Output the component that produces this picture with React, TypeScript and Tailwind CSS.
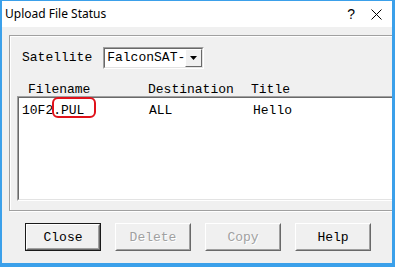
import React from 'react';

const mono = { fontFamily: '"Liberation Mono", "Courier New", monospace' };

const Sunken: React.FC<{ className?: string; children?: React.ReactNode }> = ({ className, children }) => (
    <div className={`border border-t-[#a0a0a0] border-l-[#a0a0a0] border-b-white border-r-white ${className || ''}`}>
        <div className="h-full border border-t-[#696969] border-l-[#696969] border-b-[#e3e3e3] border-r-[#e3e3e3] bg-white">
            {children}
        </div>
    </div>
);

const Button: React.FC<{ label: string; disabled?: boolean; isDefault?: boolean }> = ({ label, disabled, isDefault }) => {
    const inner = (
        <div className="h-full border border-t-white border-l-white border-b-[#696969] border-r-[#696969]">
            <div className="h-full flex items-center justify-center border border-t-[#f0f0f0] border-l-[#f0f0f0] border-b-[#a0a0a0] border-r-[#a0a0a0]">
                <span
                    className={`text-[13px] leading-none ${disabled ? 'text-[#a0a0a0] [text-shadow:1px_1px_0_#fff]' : 'text-black'}`}
                    style={mono}
                >
                    {label}
                </span>
            </div>
        </div>
    );
    return (
        <div className={`w-[76px] h-[28px] bg-[#f0f0f0] ${isDefault ? 'border border-[#1a1a1a]' : ''}`}>
            {inner}
        </div>
    );
};

const App: React.FC = () => {
    return (
        <div className="w-[395px] h-[267px] bg-[#3ba0ea] pl-[2px] pt-[1px] pr-[3px] pb-[4px] overflow-hidden">
            <div className="w-full h-full flex flex-col bg-[#f0f0f0] overflow-hidden">
                {/* title bar */}
                <div className="h-[26px] shrink-0 bg-white flex items-center">
                    <span
                        className="ml-[3px] text-[12px] text-black"
                        style={{ fontFamily: '"Noto Sans", "Liberation Sans", sans-serif' }}
                    >
                        Upload File Status
                    </span>
                    <span
                        className="ml-auto text-[14px] leading-none text-black"
                        style={{ fontFamily: '"Liberation Sans", sans-serif' }}
                    >
                        ?
                    </span>
                    <svg className="ml-[16px] mr-[10px]" width="11" height="11" viewBox="0 0 11 11">
                        <path d="M0.5 0.5 L10.5 10.5 M10.5 0.5 L0.5 10.5" stroke="#000" strokeWidth="1" fill="none" />
                    </svg>
                </div>

                {/* group box */}
                <div className="mt-[8px] ml-[7px] w-[390px] h-[176px] shrink-0 border border-[#a0a0a0] shadow-[inset_1px_1px_0_#fff,1px_1px_0_#fff] flex flex-col">
                    <div className="flex items-center mt-[11px] h-[22px]" style={mono}>
                        <span className="ml-[12px] text-[13px] text-black">Satellite</span>
                        <Sunken className="ml-[11px] w-[101px] h-[22px]">
                            <div className="h-full flex items-center">
                                <span className="ml-[2px] w-[78px] text-[13px] text-black whitespace-nowrap">
                                    FalconSAT-
                                </span>
                                <div className="w-[17px] h-full bg-[#f0f0f0] border border-t-white border-l-white border-b-[#696969] border-r-[#696969] flex items-center justify-center">
                                    <svg width="7" height="4" viewBox="0 0 7 4">
                                        <path d="M0 0 H7 L3.5 4 Z" fill="#000" />
                                    </svg>
                                </div>
                            </div>
                        </Sunken>
                    </div>

                    <div className="flex mt-[13px] h-[15px] items-center text-[13px] text-black" style={mono}>
                        <span className="ml-[18px] w-[120px]">Filename</span>
                        <span className="w-[103px]">Destination</span>
                        <span>Title</span>
                    </div>

                    <Sunken className="ml-[7px] mt-[-1px] h-[105px]">
                        <div className="flex h-[21px] leading-[25px] text-[13px] text-black" style={mono}>
                            <span className="ml-[3px] w-[127px] whitespace-pre flex">
                                <span>10F2</span>
                                <span className="relative">
                                    .PUL
                                    <span className="absolute left-[-1px] top-[-1px] w-[44px] h-[21px] border-2 border-[#e0121b] rounded-[6px]" />
                                </span>
                            </span>
                            <span className="w-[104px]">ALL</span>
                            <span>Hello</span>
                        </div>
                    </Sunken>
                </div>

                {/* buttons */}
                <div className="flex mt-[12px] ml-[23px] gap-[14px]">
                    <Button label="Close" isDefault />
                    <Button label="Delete" disabled />
                    <Button label="Copy" disabled />
                    <Button label="Help" />
                </div>
            </div>
        </div>
    );
};

export default App;
